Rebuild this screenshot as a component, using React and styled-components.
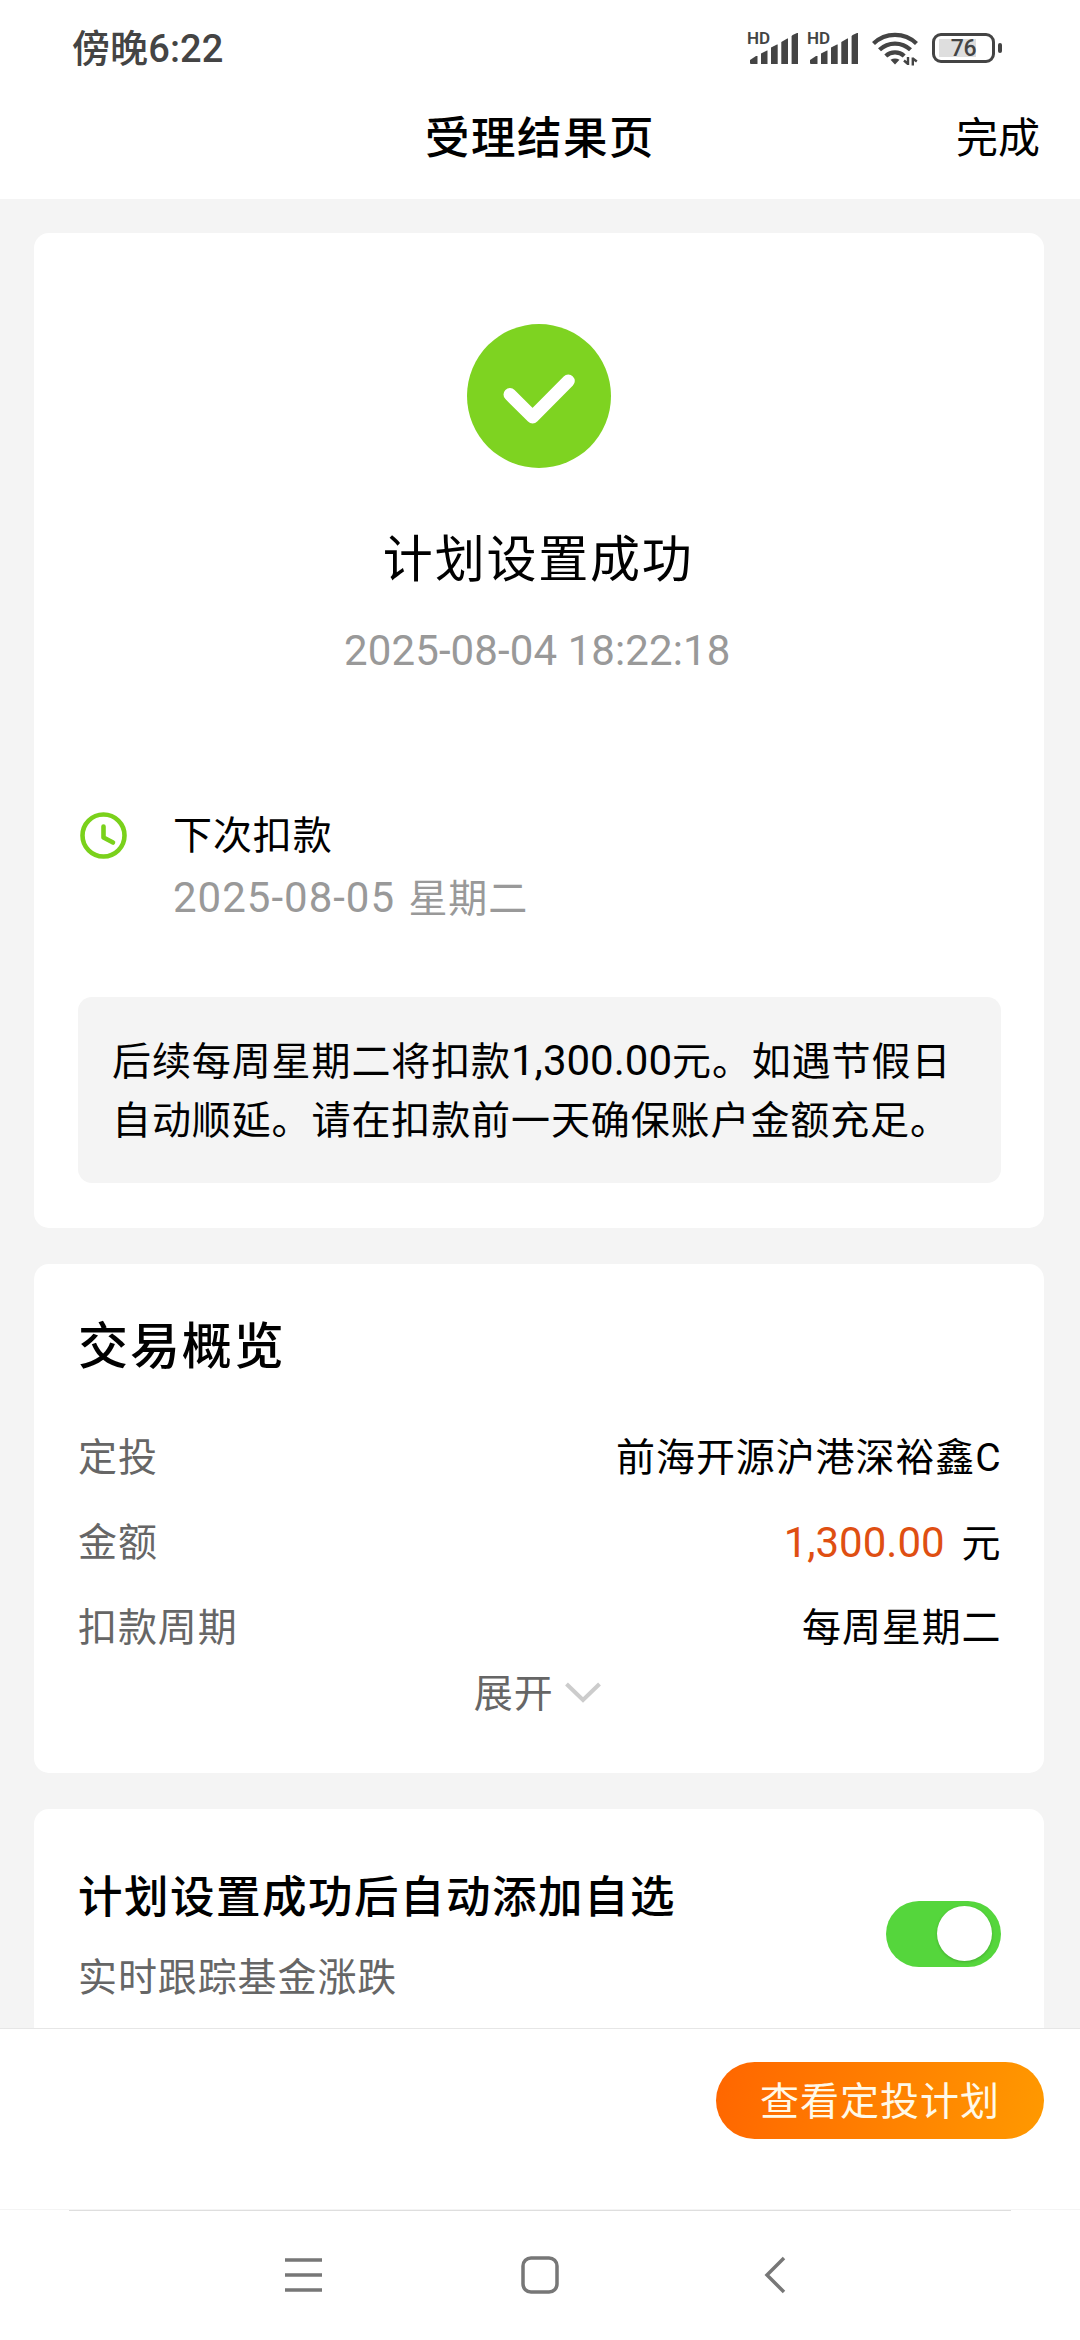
import React from 'react'
import styled, { createGlobalStyle } from 'styled-components'

const GlobalStyle = createGlobalStyle`
  * { box-sizing: border-box; }
  body {
    margin: 0;
    background: #f4f4f4;
    font-family: Roboto, "Noto Sans CJK SC", sans-serif;
    font-size: 39px;
    letter-spacing: 0.9px;
    color: #000;
  }
  svg { display: block; }
`

const Page = styled.div`
  width: 1080px;
  height: 2340px;
  display: flex;
  flex-direction: column;
  overflow: hidden;
`

const StatusBar = styled.div`
  height: 78px;
  padding: 18px 78px 0 72px;
  display: flex;
  align-items: flex-start;
  justify-content: space-between;
  background: #fff;
  color: #444;
`
const Clock = styled.div`
  font-size: 38px;
  font-weight: 500;
  line-height: 62px;
  letter-spacing: 0.1px;
`
const StatusIcons = styled.div`
  display: flex;
  align-items: flex-start;
  padding-top: 13px;
`
const Signal = styled.svg`
  margin-right: 8px;
  overflow: visible;
`
const Wifi = styled.svg`
  margin: 0 14px 0 4px;
`
const Battery = styled.div`
  display: flex;
  align-items: center;
  gap: 3px;
  padding-top: 2px;
  &::after {
    content: "";
    width: 4px;
    height: 10px;
    border-radius: 2px;
    background: #444;
  }
`
const BatteryBody = styled.div`
  width: 63px;
  height: 30px;
  border: 3px solid #444;
  border-radius: 9px;
  padding: 3px 4px;
`
const BatteryLevel = styled.div`
  height: 18px;
  background: linear-gradient(to right, #dedede 76%, #fff 76%);
  font-size: 23px;
  font-weight: 500;
  line-height: 19px;
  letter-spacing: -0.3px;
  text-align: center;
`

const TitleBar = styled.header`
  height: 121px;
  padding: 0 40px;
  display: grid;
  grid-template-columns: 1fr auto 1fr;
  background: #fff;
  line-height: 122px;
`
const PageTitle = styled.h1`
  grid-column: 2;
  margin: 0;
  font-size: 44.5px;
  font-weight: 500;
  letter-spacing: 1.5px;
`
const Done = styled.span`
  justify-self: end;
  font-size: 42px;
  letter-spacing: 0;
`

const Content = styled.main`
  flex: 1;
  min-height: 0;
  overflow: hidden;
  padding: 34px 36px 0 34px;
  display: flex;
  flex-direction: column;
  gap: 36px;
`
const Card = styled.section`
  flex: none;
  height: ${props => props.$height}px;
  padding: 0 43.5px 0 44px;
  border-radius: 15px;
  background: #fff;
`

const Result = styled.div`
  padding-top: 91px;
  display: flex;
  flex-direction: column;
  align-items: center;
`
const ResultTitle = styled.div`
  margin-top: 52px;
  padding-right: 2px;
  font-size: 50px;
  line-height: 80px;
  letter-spacing: 1.8px;
`
const ResultTime = styled.div`
  margin-top: 19px;
  padding-right: 4px;
  font-size: 42px;
  line-height: 64px;
  letter-spacing: 0.1px;
  color: #999;
`

const NextPay = styled.div`
  margin-top: 129px;
  padding-left: 2px;
  display: flex;
  gap: 46px;
`
const NextPayText = styled.div`
  display: flex;
  flex-direction: column;
  line-height: 62px;
  margin-top: -7px;
`
const NextPayDate = styled.div`
  color: #999;
`
const Num = styled.span`
  font-size: 42px;
  letter-spacing: 0;
`
const DateNum = styled(Num)`
  letter-spacing: 1px;
  word-spacing: 2px;
`

const Notice = styled.div`
  margin-top: 67px;
  height: 186px;
  padding: 34px;
  border-radius: 14px;
  background: #f4f4f4;
  line-height: 59.3px;
  white-space: nowrap;
`

const CardTitle = styled.h2`
  margin: 0;
  padding-top: 50px;
  font-size: 50px;
  font-weight: 500;
  line-height: 66px;
  letter-spacing: 1.9px;
`
const Rows = styled.div`
  padding-top: 36px;
`
const Row = styled.div`
  height: 85px;
  display: flex;
  align-items: center;
  justify-content: space-between;
  line-height: 85px;
`
const Label = styled.span`
  color: #666;
`
const Value = styled.span`
  margin-right: -1px;
`
const Amount = styled(Num)`
  margin-right: 17px;
  color: #df4f12;
`
const Expand = styled.div`
  margin-top: -23px;
  padding-right: 4px;
  height: 84px;
  display: flex;
  align-items: center;
  justify-content: center;
  gap: 11px;
  color: #666;
`
const Chevron = styled.svg`
  margin-top: 4px;
`

const Watch = styled.div`
  padding-top: 47px;
  display: flex;
  justify-content: space-between;
`
const WatchTitle = styled.h3`
  margin: 0;
  font-size: 44.5px;
  font-weight: 500;
  line-height: 84px;
  letter-spacing: 1.5px;
`
const WatchHint = styled.div`
  line-height: 76px;
  color: #666;
`
const Switch = styled.button`
  width: 115px;
  height: 66px;
  margin-top: 45px;
  padding: 5px 9px;
  display: flex;
  justify-content: flex-end;
  border: none;
  border-radius: 33px;
  background: #55d63c;
`
const Knob = styled.span`
  width: 55px;
  height: 55px;
  border-radius: 50%;
  background: #fff;
  box-shadow: 0 1px 3px rgba(0, 0, 0, 0.2);
`

const Footer = styled.footer`
  height: 181px;
  padding: 33px 36px 0;
  display: flex;
  justify-content: flex-end;
  align-items: flex-start;
  border-top: 1px solid #e6e6e6;
  background: #fff;
`
const PlanButton = styled.button`
  width: 328px;
  height: 77px;
  padding: 0 0 6px;
  border: none;
  border-radius: 39px;
  background: linear-gradient(100deg, #ff6600, #ff9900);
  color: #fff9e8;
  font: inherit;
  letter-spacing: 1px;
`

const NavBar = styled.nav`
  height: 131px;
  display: flex;
  flex-direction: column;
  align-items: center;
  background: #fff;
  border-top: 1px solid #f4f4f4;
`
const NavLine = styled.div`
  width: 942px;
  height: 1px;
  background: #dedede;
`
const NavIcons = styled.div`
  width: 100%;
  padding: 43px 294px 0 284px;
  display: flex;
  justify-content: space-between;
`

const SignalIcon = () => (
  <Signal width="52" height="34" viewBox="0 0 52 34" fill="#444">
    <text x="-1" y="13" fontSize="17" fontWeight="600" letterSpacing="0" fontFamily="Roboto">HD</text>
    <path d="M2 29l6-4h1.500v7.500q0 .5-.5.500h-6q-1 0-1-1z" />
    <path d="M13 22.500l6-3h.500v13.500h-6.500z" />
    <path d="M23 16.500l6-3h.700v19.500h-6.700z" />
    <path d="M33.300 11l6-3.500h.700v25.500h-6.700z" />
    <path d="M43.600 5.500q0-1 1-1.500l4.400-2h1v31h-6.400z" />
  </Signal>
)

const WifiIcon = () => (
  <Wifi width="46" height="35" viewBox="0 0 46 35" fill="none" stroke="#444" strokeWidth="4.300">
    <path d="M1.500 12.500a31 31 0 0 1 43 0" />
    <path d="M7.500 18.800a22.500 22.500 0 0 1 31 0" />
    <path d="M13.800 25a13.500 13.500 0 0 1 18.400 0" />
    <path d="M18.500 28.800q4.500-2.800 9 0l-4.500 4.700z" fill="#444" stroke="none" />
    <path d="M36 26v8M36 33l-4-3.500M40.800 34.500v-8M40.800 27.500l4 3" strokeWidth="2.400" />
  </Wifi>
)

const rows = [
  { label: '定投', value: '前海开源沪港深裕鑫C' },
  { label: '金额', amount: '1,300.00', value: '元' },
  { label: '扣款周期', value: '每周星期二' },
]

const App = () => {
  return (
    <>
      <GlobalStyle />
      <Page>
        <StatusBar>
          <Clock>傍晚6:22</Clock>
          <StatusIcons>
            <SignalIcon />
            <SignalIcon />
            <WifiIcon />
            <Battery>
              <BatteryBody>
                <BatteryLevel>76</BatteryLevel>
              </BatteryBody>
            </Battery>
          </StatusIcons>
        </StatusBar>
        <TitleBar>
          <PageTitle>受理结果页</PageTitle>
          <Done>完成</Done>
        </TitleBar>

        <Content>
          <Card $height={995}>
            <Result>
              <svg width="144" height="144" viewBox="0 0 144 144" fill="none">
                <circle cx="72" cy="72" r="72" fill="#7ed321" />
                <path d="M43 70.500L65.600 93L101.300 57" stroke="#fff" strokeWidth="13" strokeLinecap="round" strokeLinejoin="round" />
              </svg>
              <ResultTitle>计划设置成功</ResultTitle>
              <ResultTime>2025-08-04 18:22:18</ResultTime>
            </Result>
            <NextPay>
              <svg width="47" height="47" viewBox="0 0 47 47" fill="none" stroke="#7ad11b" strokeWidth="4.600">
                <circle cx="23.500" cy="23.500" r="21" />
                <path d="M23.500 14.500v11l9.500 5" strokeLinecap="round" strokeLinejoin="round" />
              </svg>
              <NextPayText>
                <div>下次扣款</div>
                <NextPayDate><DateNum>2025-08-05 </DateNum>星期二</NextPayDate>
              </NextPayText>
            </NextPay>
            <Notice>
              后续每周星期二将扣款<Num>1,300.00</Num>元。如遇节假日
              <br />
              自动顺延。请在扣款前一天确保账户金额充足。
            </Notice>
          </Card>

          <Card $height={509}>
            <CardTitle>交易概览</CardTitle>
            <Rows>
              {rows.map(row => (
                <Row key={row.label}>
                  <Label>{row.label}</Label>
                  <Value>
                    {row.amount && <Amount>{row.amount}</Amount>}
                    {row.value}
                  </Value>
                </Row>
              ))}
            </Rows>
            <Expand>
              展开
              <Chevron width="36" height="21" viewBox="0 0 36 21" fill="none" stroke="#ccc" strokeWidth="4">
                <path d="M1.500 2L18 18L34.500 2" />
              </Chevron>
            </Expand>
          </Card>

          <Card $height={260}>
            <Watch>
              <div>
                <WatchTitle>计划设置成功后自动添加自选</WatchTitle>
                <WatchHint>实时跟踪基金涨跌</WatchHint>
              </div>
              <Switch>
                <Knob />
              </Switch>
            </Watch>
          </Card>
        </Content>

        <Footer>
          <PlanButton>查看定投计划</PlanButton>
        </Footer>

        <NavBar>
          <NavLine />
          <NavIcons>
            <svg width="39" height="42" viewBox="0 0 39 42" stroke="#777" strokeWidth="3.500">
              <path d="M1 6H38M1 21H38M1 36H38" />
            </svg>
            <svg width="42" height="42" viewBox="0 0 42 42" fill="none" stroke="#777" strokeWidth="3.500">
              <rect x="4" y="4" width="34" height="34" rx="8" />
            </svg>
            <svg width="29" height="42" viewBox="-7 0 29 42" fill="none" stroke="#777" strokeWidth="3.500">
              <path d="M20 4L3 21L20 38" />
            </svg>
          </NavIcons>
        </NavBar>
      </Page>
    </>
  )
}

export default App
